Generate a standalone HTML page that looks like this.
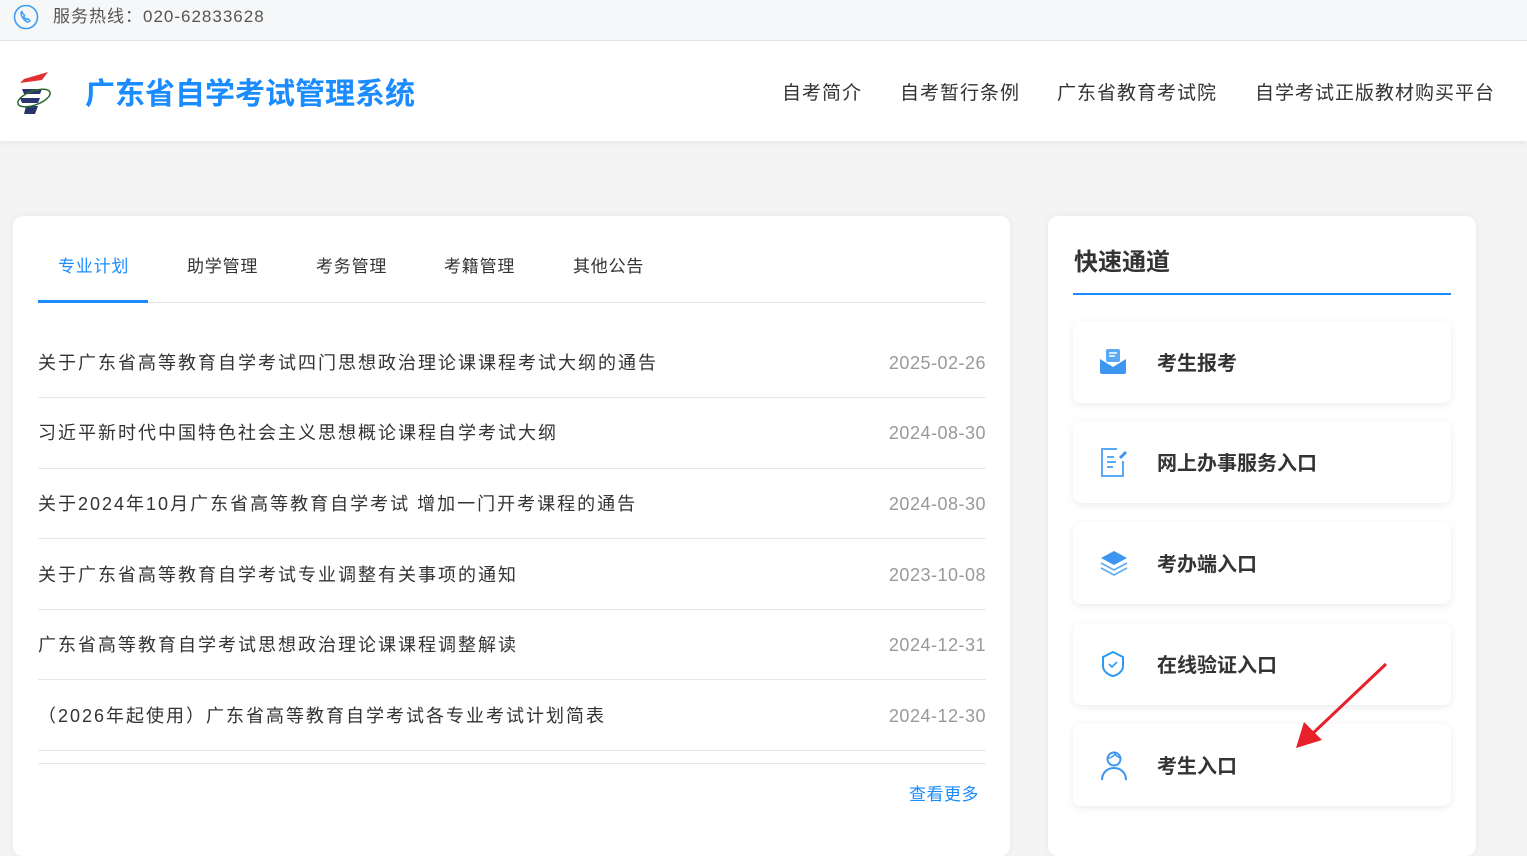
<!DOCTYPE html>
<html><head><meta charset="utf-8"><style>
*{margin:0;padding:0;box-sizing:border-box}
body{width:1527px;height:842px;overflow:hidden;background:#f4f4f5;font-family:"Liberation Sans","Noto Sans CJK SC",sans-serif;position:relative}
.top{position:absolute;left:0;top:0;width:1527px;height:41px;background:#f6f7f9;border-bottom:1px solid #e2e2e2}
.top span{position:absolute;left:53px;top:6px;font-size:17px;line-height:22px;color:#555;letter-spacing:1px}
.hdr{position:absolute;left:0;top:41px;width:1527px;height:100px;background:#fff;box-shadow:0 2px 6px rgba(0,0,0,.06)}
.title{position:absolute;left:85px;top:34px;font-size:30px;line-height:40px;font-weight:bold;color:#1a8cff}
.nav{position:absolute;top:41px;font-size:19px;line-height:24px;color:#333;letter-spacing:1px}
.card{position:absolute;background:#fff;border-radius:10px;box-shadow:0 0 8px rgba(0,0,0,.05)}
.tab{position:absolute;top:39px;font-size:17px;line-height:24px;color:#333;letter-spacing:0.8px}
.row{position:absolute;left:25px;width:948px;height:71px;border-bottom:1px solid #e6e6e6}
.row .t{position:absolute;left:0;top:23px;font-size:18px;line-height:26px;color:#333;letter-spacing:2px;white-space:nowrap}
.row .d{position:absolute;right:0;top:23px;font-size:18px;line-height:26px;color:#999;letter-spacing:0.5px}
.item{position:absolute;left:25px;width:378px;height:82px;background:#fff;border-radius:8px;box-shadow:0 2px 8px rgba(0,0,0,.08)}
.item .l{position:absolute;left:84px;top:29px;font-size:20px;line-height:28px;font-weight:bold;color:#333}
.item svg{position:absolute;left:26px;top:26px}
</style></head><body>
<div class="top">
<svg style="position:absolute;left:13px;top:4px" width="26" height="26" viewBox="0 0 26 26"><circle cx="13" cy="13" r="11.5" fill="none" stroke="#3a9cf5" stroke-width="1.6"/><path d="M9 7.5c-1.5 1-1.5 3 .5 6s4.5 5 6 4.5l1.5-1.3-2-2-1.3.8c-1-.5-2.5-2-3-3l.8-1.3-2-2z" fill="none" stroke="#3a9cf5" stroke-width="1.4"/></svg>
<span>服务热线：020-62833628</span></div>
<div class="hdr">
<svg style="position:absolute;left:14px;top:30px" width="40" height="44" viewBox="0 0 40 44"><polygon points="10,8 34,1 28,9 6,12" fill="#e03030"/><path d="M8 18h20l-2 5H10z" fill="#2a3570"/><path d="M6 27h20l-2 5H8z" fill="#2a3570"/><path d="M12 35h12l-3 8H10z" fill="#2a3570"/><ellipse cx="20" cy="27" rx="17" ry="7" fill="none" stroke="#2d6a2d" stroke-width="1.5" transform="rotate(-20 20 27)"/></svg>
<div class="title">广东省自学考试管理系统</div>
<div class="nav" style="left:782px">自考简介</div>
<div class="nav" style="left:900px">自考暂行条例</div>
<div class="nav" style="left:1057px">广东省教育考试院</div>
<div class="nav" style="left:1255px">自学考试正版教材购买平台</div>
</div>
<div class="card" style="left:13px;top:216px;width:997px;height:640px">
<div class="tab" style="left:45px;color:#1a8cff">专业计划</div>
<div class="tab" style="left:174px">助学管理</div>
<div class="tab" style="left:303px">考务管理</div>
<div class="tab" style="left:431px">考籍管理</div>
<div class="tab" style="left:560px">其他公告</div>
<div style="position:absolute;left:25px;top:86px;width:948px;height:1px;background:#e6e6e6"></div>
<div style="position:absolute;left:25px;top:84px;width:110px;height:3px;background:#1a8cff"></div>
<div class="row" style="top:111px"><span class="t">关于广东省高等教育自学考试四门思想政治理论课课程考试大纲的通告</span><span class="d">2025-02-26</span></div>
<div class="row" style="top:182px"><span class="t" style="top:22px">习近平新时代中国特色社会主义思想概论课程自学考试大纲</span><span class="d" style="top:22px">2024-08-30</span></div>
<div class="row" style="top:252px"><span class="t">关于2024年10月广东省高等教育自学考试 增加一门开考课程的通告</span><span class="d">2024-08-30</span></div>
<div class="row" style="top:323px"><span class="t">关于广东省高等教育自学考试专业调整有关事项的通知</span><span class="d">2023-10-08</span></div>
<div class="row" style="top:393px"><span class="t">广东省高等教育自学考试思想政治理论课课程调整解读</span><span class="d">2024-12-31</span></div>
<div class="row" style="top:464px"><span class="t">（2026年起使用）广东省高等教育自学考试各专业考试计划简表</span><span class="d">2024-12-30</span></div>
<div style="position:absolute;left:25px;top:547px;width:948px;height:1px;background:#e6e6e6"></div>
<div style="position:absolute;left:896px;top:567px;font-size:17px;line-height:24px;color:#1a8cff;letter-spacing:0.5px">查看更多</div>
</div>
<div class="card" style="left:1048px;top:216px;width:428px;height:640px">
<div style="position:absolute;left:26px;top:31px;font-size:24px;line-height:32px;font-weight:bold;color:#333">快速通道</div>
<div style="position:absolute;left:25px;top:77px;width:378px;height:2px;background:#1a8cff"></div>
<div class="item" style="top:105px"><svg width="28" height="28" viewBox="0 0 28 28"><rect x="7" y="2" width="14" height="13" rx="2" fill="#5aa9f7"/><path d="M10 6h8M10 9h6" stroke="#fff" stroke-width="1.4"/><path d="M1 12l13 8 13-8v13a2 2 0 0 1-2 2H3a2 2 0 0 1-2-2z" fill="#3d95f2"/></svg><span class="l">考生报考</span></div>
<div class="item" style="top:205px"><svg width="30" height="32" viewBox="0 0 30 32"><path d="M18 2H3v27h21V14" fill="none" stroke="#5aa9f7" stroke-width="2"/><path d="M8 10h7M8 15h9M8 20h6" stroke="#5aa9f7" stroke-width="2"/><path d="M20 10l6-6 2 2-6 6z" fill="#3d95f2"/></svg><span class="l">网上办事服务入口</span></div>
<div class="item" style="top:306px"><svg width="30" height="28" viewBox="0 0 30 28"><path d="M15 3l13 7-13 7-13-7z" fill="#3d95f2"/><path d="M2 15l13 7 13-7M2 20l13 7 13-7" fill="none" stroke="#5aa9f7" stroke-width="1.6"/></svg><span class="l">考办端入口</span></div>
<div class="item" style="top:407px"><svg width="28" height="30" viewBox="0 0 28 30"><path d="M14 3l10 5v9c0 5-5 9-10 10C9 26 4 22 4 17V8z" fill="none" stroke="#2d9af5" stroke-width="2"/><path d="M10 15l3 3 5-5" fill="none" stroke="#2d9af5" stroke-width="1.6"/></svg><span class="l">在线验证入口</span></div>
<div class="item" style="top:508px"><svg width="30" height="32" viewBox="0 0 30 32"><circle cx="15" cy="9" r="6.5" fill="none" stroke="#3d95f2" stroke-width="2"/><path d="M3 30c0-7 5-12 12-12s12 5 12 12" fill="none" stroke="#3d95f2" stroke-width="2"/><path d="M9 8c3 0 5-1 7-4 1 2 3 3 5 4" fill="none" stroke="#3d95f2" stroke-width="1.5"/></svg><span class="l">考生入口</span></div>
</div>
<svg style="position:absolute;left:1290px;top:660px" width="100" height="95" viewBox="0 0 100 95"><path d="M96 4L20 76" stroke="#e8202a" stroke-width="3"/><polygon points="6,88 14,62 32,80" fill="#e8202a"/></svg>
</body></html>
